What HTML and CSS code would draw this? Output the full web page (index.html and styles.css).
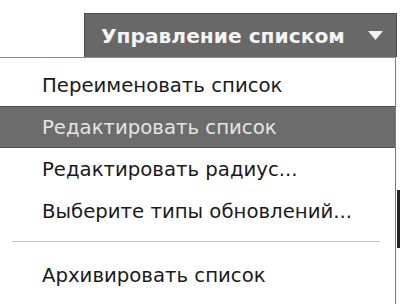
FILE: index.html
```html
<!DOCTYPE html>
<html lang="ru">
<head>
<meta charset="utf-8">
<link rel="stylesheet" href="styles.css">
</head>
<body>
<div class="header">
  <div class="tab">
    <span class="tab-title">Управление списком</span>
    <svg class="caret" width="15" height="10" viewBox="0 0 15 10"><polygon points="0,0 15,0 7.5,9" fill="#f2f2f2"/></svg>
  </div>
</div>
<div class="menu">
  <div class="item">Переименовать список</div>
  <div class="item active">Редактировать список</div>
  <div class="item">Редактировать радиус...</div>
  <div class="item">Выберите типы обновлений...</div>
  <div class="sep"></div>
  <div class="item">Архивировать список</div>
</div>
<div class="edge"></div>
</body>
</html>
```
FILE: styles.css
```css
html, body {
  margin: 0;
  padding: 0;
  background: #fff;
  width: 400px;
  height: 304px;
  overflow: hidden;
  position: relative;
  font-family: "DejaVu Sans", Verdana, sans-serif;
}
.header {
  display: flex;
  justify-content: flex-end;
  padding-top: 13px;
  padding-right: 3px;
}
.tab {
  width: 313px;
  height: 44px;
  box-sizing: border-box;
  background: #686868;
  border: 1px solid #4c4c4c;
  border-bottom: none;
  display: flex;
  align-items: center;
  padding-left: 16px;
  gap: 23px;
}
.tab-title {
  color: #f4f4f4;
  font-weight: bold;
  font-size: 20.2px;
}
.caret {
  margin-top: 1px;
}
.menu {
  width: 396px;
  box-sizing: border-box;
  border-top: 1px solid #8a8a8a;
  border-right: 1px solid #7a7a7a;
  padding-top: 6px;
  height: 260px;
}
.item {
  height: 42px;
  box-sizing: border-box;
  display: flex;
  align-items: center;
  padding-left: 42px;
  font-size: 19.7px;
  color: #1a1a1a;
}
.item.active {
  background: #6c6c6c;
  color: #e4e4e4;
  border-top: 1px solid #505050;
  border-bottom: 1px solid #505050;
}
.sep {
  height: 1px;
  background: #c8c8c8;
  margin: 9px 15px 12px 12px;
}
.edge {
  position: absolute;
  left: 397px;
  top: 190px;
  width: 3px;
  height: 58px;
  background: #222;
}
```
